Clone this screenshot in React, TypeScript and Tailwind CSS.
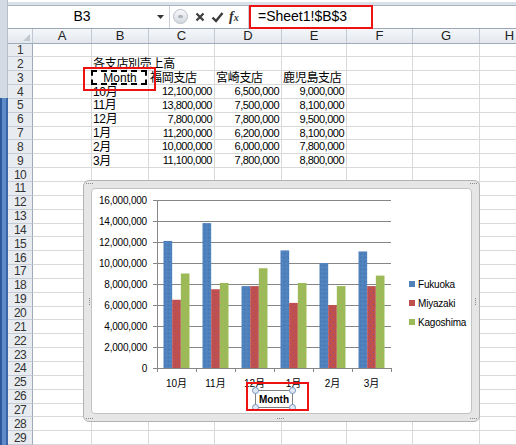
import React from 'react';

const COLS = [
  { key: 'A', w: 59 },
  { key: 'B', w: 57 },
  { key: 'C', w: 66 },
  { key: 'D', w: 67 },
  { key: 'E', w: 65 },
  { key: 'F', w: 66 },
  { key: 'G', w: 67 },
  { key: 'H', w: 60 },
];

type Cell = { text: string; align?: 'left' | 'right' | 'center' };

const rowsData: Record<number, Record<string, Cell>> = {
  2: { B: { text: '各支店別売上高' } },
  3: {
    B: { text: 'Month', align: 'center' },
    C: { text: '福岡支店' },
    D: { text: '宮崎支店' },
    E: { text: '鹿児島支店' },
  },
};

const months = ['10月', '11月', '12月', '1月', '2月', '3月'];
const fuku = [12.1, 13.8, 7.8, 11.2, 10.0, 11.1];
const miya = [6.5, 7.5, 7.8, 6.2, 6.0, 7.8];
const kago = [9.0, 8.1, 9.5, 8.1, 7.8, 8.8];

const fmt = (v: number) => Math.round(v * 1000000).toLocaleString('en-US');

months.forEach((m, i) => {
  rowsData[4 + i] = {
    B: { text: m },
    C: { text: fmt(fuku[i]), align: 'right' },
    D: { text: fmt(miya[i]), align: 'right' },
    E: { text: fmt(kago[i]), align: 'right' },
  };
});

const FormulaBar = () => (
  <div className="flex h-[24px] border-t border-b border-t-[#a9b3c1] border-b-[#9aa6b6] bg-white">
    <div className="flex w-[162px] items-center border-r border-[#c9d0da]">
      <div className="flex-1 text-center text-[14px] text-black">B3</div>
      <svg width="9" height="6" viewBox="0 0 9 6" className="mr-[4px]">
        <path d="M1 1 L8 1 L4.5 5 Z" fill="#333" />
      </svg>
    </div>
    <div className="flex w-[78px] items-center">
      <div className="ml-[3px] flex h-[15px] w-[15px] items-center justify-center rounded-full border border-[#b9bfc8] bg-gradient-to-b from-[#f7f8fa] to-[#d5d9df]">
        <div className="h-[3px] w-[5px] rounded-full bg-[#aeb4bd]" />
      </div>
      <svg width="12" height="12" viewBox="0 0 12 12" className="ml-[6px]">
        <path d="M2.5 2.5 L9.5 9.5 M9.5 2.5 L2.5 9.5" stroke="#3c3c3c" strokeWidth="2.2" />
      </svg>
      <svg width="13" height="12" viewBox="0 0 13 12" className="ml-[5px]">
        <path d="M1.5 6.5 L5 10 L11.5 2" stroke="#3c3c3c" strokeWidth="2.4" fill="none" />
      </svg>
      <span className="ml-[5px] font-['Liberation_Serif'] text-[14px] font-bold italic leading-none text-[#333]">
        f<span className="text-[10px]">x</span>
      </span>
    </div>
    <div className="flex flex-1 items-center border-l border-[#c9d0da] pl-[9px] text-[14px] text-black">
      =Sheet1!$B$3
    </div>
  </div>
);

const ColumnHeader = () => (
  <div className="flex h-[15px] border-b border-[#9eabbb] bg-gradient-to-b from-[#f5f7fa] to-[#e3e8ee]">
    <div className="relative w-[25px] shrink-0 border-r border-[#c2c9d3]">
      <svg width="7" height="7" viewBox="0 0 7 7" className="absolute bottom-[2px] right-[2px]">
        <path d="M7 0 L7 7 L0 7 Z" fill="#c3c8cf" />
      </svg>
    </div>
    {COLS.map((c) => (
      <div
        key={c.key}
        style={{ width: c.w }}
        className="flex shrink-0 items-center justify-center border-r border-[#c2c9d3] text-[13px] leading-none text-[#222]"
      >
        {c.key}
      </div>
    ))}
  </div>
);

const SheetRow = ({ n }: { n: number }) => {
  const data = rowsData[n] || {};
  return (
    <div className="flex h-[14px]">
      <div className="flex w-[25px] shrink-0 items-center justify-center border-r border-b border-r-[#9eabbb] border-b-[#c5ccd6] bg-[#e8ecf1] text-[12px] leading-none tracking-[-0.7px] text-[#333]">
        {n}
      </div>
      {COLS.map((c) => {
        const cell = data[c.key];
        const boxed = n === 3 && c.key === 'B';
        return (
          <div
            key={c.key}
            style={{ width: c.w }}
            className="relative shrink-0 border-r border-b border-[#d9d9d9]"
          >
            {boxed && (
              <div className="absolute -left-[1px] -top-[1px] bottom-[-1px] right-[1px] border-2 border-dashed border-black" />
            )}
            {cell && (
              <div
                className={
                  'absolute inset-y-0 flex items-center whitespace-nowrap leading-none text-black ' +
                  (cell.align === 'right'
                    ? 'right-[2px] justify-end text-[11px] tracking-[-0.5px]'
                    : cell.align === 'center'
                      ? 'left-0 right-0 justify-center text-[12px]'
                      : 'left-[1px] text-[12px] tracking-[-0.3px]')
                }
              >
                {cell.text}
              </div>
            )}
          </div>
        );
      })}
    </div>
  );
};

const Chart = () => {
  const base = 179;
  const k = 10.5;
  const cw = 39;
  const bw = 39 / 4.5;
  const series = [
    { name: 'Fukuoka', data: fuku, fill: 'url(#pb)', sw: '#4f81bd' },
    { name: 'Miyazaki', data: miya, fill: 'url(#pr)', sw: '#c0504d' },
    { name: 'Kagoshima', data: kago, fill: 'url(#pg)', sw: '#9bbb59' },
  ];
  return (
    <svg width="382" height="225" viewBox="0 0 382 225" className="block">
      <defs>
        <pattern id="pb" width="4" height="4" patternUnits="userSpaceOnUse">
          <rect width="4" height="4" fill="#4f81bd" />
          <rect x="0" y="0" width="1" height="1" fill="#4172b0" />
          <rect x="2" y="2" width="1" height="1" fill="#5b8cc6" />
        </pattern>
        <pattern id="pr" width="5" height="6" patternUnits="userSpaceOnUse">
          <rect width="5" height="6" fill="#c0504d" />
          <rect x="1" y="1" width="1" height="1" fill="#8e4d8f" />
          <rect x="3" y="4" width="1" height="1" fill="#a04c70" />
        </pattern>
        <pattern id="pg" width="6" height="7" patternUnits="userSpaceOnUse">
          <rect width="6" height="7" fill="#9bbb59" />
          <rect x="2" y="2" width="1" height="1" fill="#c9a15a" />
          <rect x="5" y="5" width="1" height="1" fill="#b8ae5e" />
        </pattern>
      </defs>
      {[1, 2, 3, 4, 5, 6, 7, 8].map((i) => (
        <line key={i} x1="61" x2="299" y1={base - i * 21 + 0.5} y2={base - i * 21 + 0.5} stroke="#868686" />
      ))}
      {[0, 1, 2, 3, 4, 5, 6, 7, 8].map((i) => (
        <text
          key={i}
          x="55"
          y={base - i * 21 + 3.5}
          textAnchor="end"
          fontSize="10"
          fontFamily="Liberation Sans"
          fill="#000"
          letterSpacing="-0.2"
        >
          {i === 0 ? '0' : (i * 2000000).toLocaleString('en-US')}
        </text>
      ))}
      {series.map((s, si) =>
        s.data.map((v, i) => (
          <rect
            key={s.name + i}
            x={65 + i * cw + 6.5 + si * bw}
            y={base - v * k}
            width={bw}
            height={v * k}
            fill={s.fill}
          />
        ))
      )}
      <line x1="65.5" x2="65.5" y1="11" y2={base} stroke="#868686" />
      <line x1="61" x2="299" y1={base + 0.5} y2={base + 0.5} stroke="#868686" />
      {[0, 1, 2, 3, 4, 5, 6].map((i) => (
        <line key={i} x1={65.5 + i * cw} x2={65.5 + i * cw} y1={base} y2={base + 4} stroke="#868686" />
      ))}
      {months.map((m, i) => (
        <text
          key={m}
          x={65 + i * cw + 19.5}
          y="198"
          textAnchor="middle"
          fontSize="10"
          fontFamily="Liberation Sans, Noto Sans CJK JP, sans-serif"
          fill="#000"
        >
          {m}
        </text>
      ))}
      {series.map((s, si) => (
        <g key={s.name}>
          <rect x="317" y={92 + si * 19} width="6" height="6" fill={s.sw} />
          <text x="326" y={99 + si * 19} fontSize="10" fontFamily="Liberation Sans" fill="#000" letterSpacing="-0.2">
            {s.name}
          </text>
        </g>
      ))}
      <rect x="163.5" y="201.5" width="37" height="17" fill="none" stroke="#808080" />
      <text
        x="182"
        y="214"
        textAnchor="middle"
        fontSize="10"
        fontWeight="bold"
        fontFamily="Liberation Sans"
        fill="#000"
      >
        Month
      </text>
      {[
        [163.5, 201.5],
        [200.5, 201.5],
        [163.5, 218.5],
        [200.5, 218.5],
      ].map(([cx, cy]) => (
        <circle key={`${cx}-${cy}`} cx={cx} cy={cy} r="3" fill="#dfe8f4" stroke="#7392bf" />
      ))}
      <rect x="155" y="194" width="61" height="27" fill="none" stroke="#ee1111" strokeWidth="2" />
    </svg>
  );
};

const Grip = ({ className }: { className: string }) => (
  <div className={'absolute flex gap-[1px] ' + className}>
    <div className="h-[1px] w-[1px] bg-[#8a8a8a]" />
    <div className="h-[1px] w-[1px] bg-[#8a8a8a]" />
    <div className="h-[1px] w-[1px] bg-[#8a8a8a]" />
    <div className="h-[1px] w-[1px] bg-[#8a8a8a]" />
  </div>
);

export default function App() {
  const rows = Array.from({ length: 29 }, (_, i) => i + 1);
  return (
    <div className="relative flex h-[445px] w-[516px] overflow-hidden bg-white font-['Liberation_Sans','Noto_Sans_CJK_JP',sans-serif]">
      <div className="flex w-[8px] shrink-0 flex-col">
        <div className="h-[98px] border-r border-[#b5bfcc] bg-[#d3dae3]" />
        <div className="flex-1 border-l-2 border-r-2 border-l-[#2d5a9c] border-r-[#3a66a8] bg-[#5f8bc9]" />
      </div>
      <div className="flex min-w-0 flex-1 flex-col">
        <div className="h-[5px] border-t-2 border-white bg-[#dbe1e8]" />
        <FormulaBar />
        <ColumnHeader />
        {rows.map((n) => (
          <SheetRow key={n} n={n} />
        ))}
      </div>

      <div className="absolute left-[249px] top-[5px] h-[24px] w-[124px] border-2 border-[#ee1111]" />
      <div className="absolute left-[83px] top-[67px] h-[24px] w-[73px] border-2 border-[#ee1111]" />

      <div className="absolute left-[83px] top-[180px] h-[242px] w-[397px] rounded-[6px] border border-[#b2b2b2] bg-[#e6e6e6] p-[7px]">
        <div className="h-full w-full overflow-hidden rounded-[4px] border border-[#c3c3c3] bg-white">
          <Chart />
        </div>
        <Grip className="left-[2px] top-[2px]" />
        <Grip className="right-[2px] top-[2px]" />
        <Grip className="bottom-[2px] left-[2px]" />
        <Grip className="bottom-[2px] right-[2px]" />
        <Grip className="bottom-[2px] left-[193px]" />
        <Grip className="left-[2px] top-[120px] rotate-90" />
        <Grip className="right-[0px] top-[120px] rotate-90" />
      </div>
    </div>
  );
}
